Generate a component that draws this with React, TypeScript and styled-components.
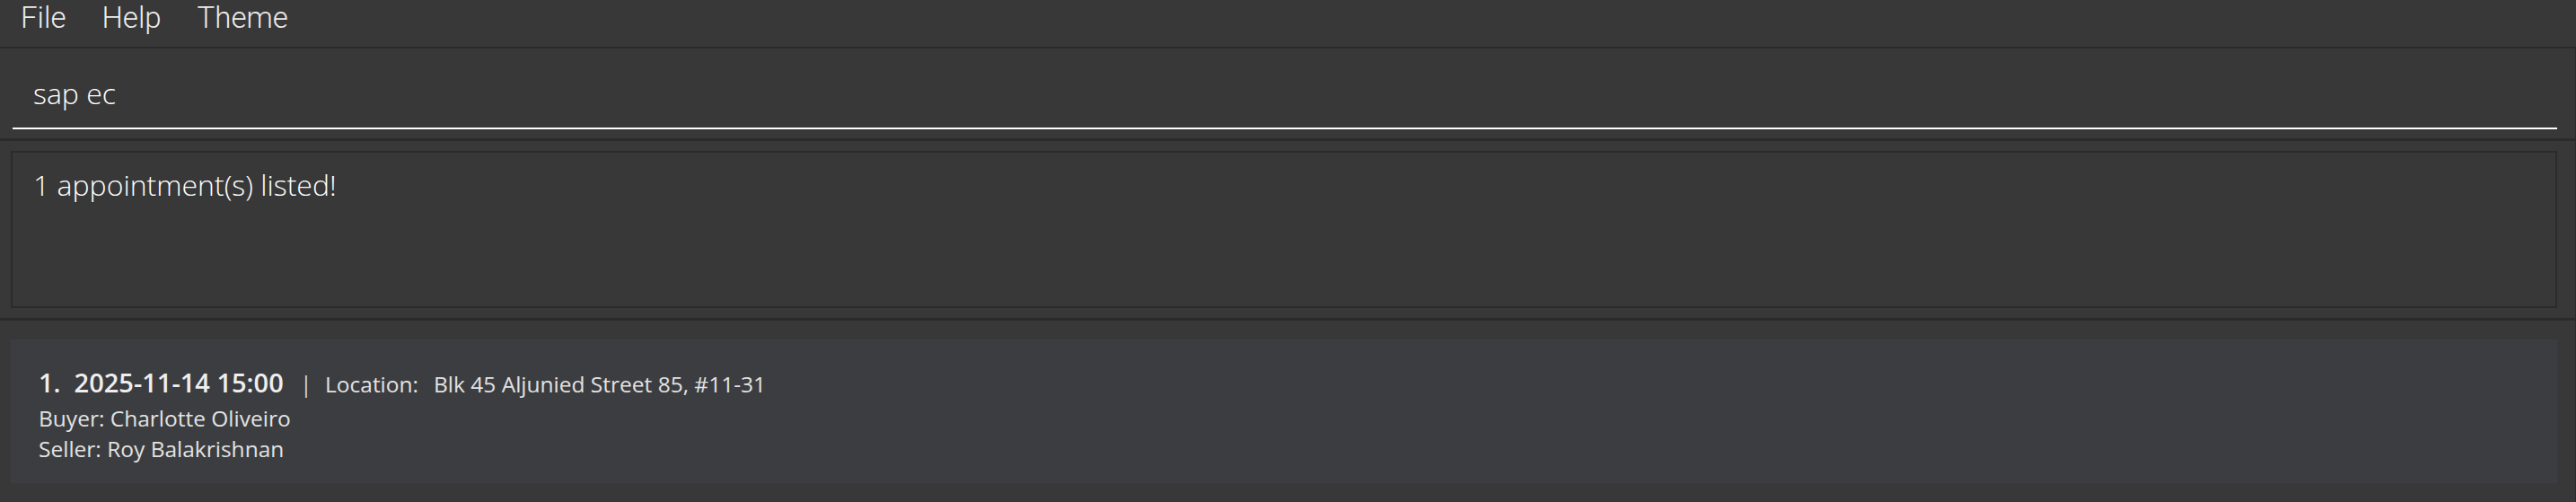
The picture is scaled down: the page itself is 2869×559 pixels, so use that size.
import React from 'react';
import styled, { createGlobalStyle } from 'styled-components';

const Global = createGlobalStyle`
  html, body { margin: 0; padding: 0; background: #383838; }
  body { font-family: "Open Sans", "Noto Sans", sans-serif; }
  #root { width: 2869px; height: 559px; overflow: hidden; }
  * { box-sizing: border-box; }
`;

const Window = styled.div`
  display: flex;
  flex-direction: column;
  width: 2869px;
  height: 559px;
  background: #383838;
`;

const MenuBar = styled.div`
  display: flex;
  align-items: flex-start;
  height: 54px;
  padding-left: 3px;
  border-bottom: 2px solid #2b2b2b;
`;

const MenuItem = styled.div`
  padding: 0 20px;
  font-family: Roboto, "Open Sans", sans-serif;
  font-weight: 300;
  font-size: 33px;
  line-height: normal;
  color: #ececec;
`;

const Main = styled.div`
  flex: 1;
  display: flex;
  flex-direction: column;
  border-right: 1px solid #2b2b2b;
`;

const CommandPane = styled.div`
  height: 103px;
  display: flex;
  flex-direction: column;
  justify-content: flex-end;
  padding: 0 20px 10px 14px;
  border-bottom: 3px solid #2b2b2b;
`;

const CommandField = styled.div`
  height: 62px;
  padding-left: 23px;
  border-bottom: 2px solid #ffffff;
  font-weight: 300;
  font-size: 32px;
  line-height: 44px;
  color: #ffffff;
`;

const ResultPane = styled.div`
  height: 200px;
  padding: 11px 20px 11px 12px;
  border-bottom: 3px solid #2b2b2b;
`;

const ResultBox = styled.div`
  height: 175px;
  border: 2px solid #2b2b2b;
  padding: 14px 23px;
  font-weight: 300;
  font-size: 32px;
  line-height: 44px;
  color: #ffffff;
`;

const ListPane = styled.div`
  flex: 1;
  padding: 21px 20px 0 12px;
`;

const Card = styled.div`
  height: 160px;
  background: #3c3d40;
  padding: 28px 31px 0;
  display: flex;
  flex-direction: column;
`;

const TitleRow = styled.div`
  display: flex;
  align-items: baseline;
  white-space: pre;
  height: 43px;
`;

const DateText = styled.span`
  font-weight: 600;
  font-size: 29px;
  line-height: 40px;
  color: #eeeeee;
`;

const Divider = styled.span`
  font-weight: 400;
  font-size: 26px;
  color: #cfcfcf;
  margin: 0 14px 0 18px;
`;

const Detail = styled.span<{ $gap?: number }>`
  font-weight: 400;
  font-size: 24.5px;
  line-height: 34px;
  color: #e2e2e2;
  margin-left: ${(p) => p.$gap ?? 0}px;
`;

const Line = styled.div`
  font-weight: 400;
  font-size: 24.5px;
  line-height: 34px;
  color: #e2e2e2;
  white-space: pre;
`;

export default function App() {
  return (
    <>
      <Global />
      <Window>
        <MenuBar>
          <MenuItem>File</MenuItem>
          <MenuItem>Help</MenuItem>
          <MenuItem>Theme</MenuItem>
        </MenuBar>
        <Main>
          <CommandPane>
            <CommandField>sap ec</CommandField>
          </CommandPane>
          <ResultPane>
            <ResultBox>1 appointment(s) listed!</ResultBox>
          </ResultPane>
          <ListPane>
            <Card>
              <TitleRow>
                <DateText>{'1.  2025-11-14 15:00'}</DateText>
                <Divider>|</Divider>
                <Detail>Location:</Detail>
                <Detail $gap={17}>Blk 45 Aljunied Street 85, #11-31</Detail>
              </TitleRow>
              <Line>Buyer: Charlotte Oliveiro</Line>
              <Line>Seller: Roy Balakrishnan</Line>
            </Card>
          </ListPane>
        </Main>
      </Window>
    </>
  );
}
